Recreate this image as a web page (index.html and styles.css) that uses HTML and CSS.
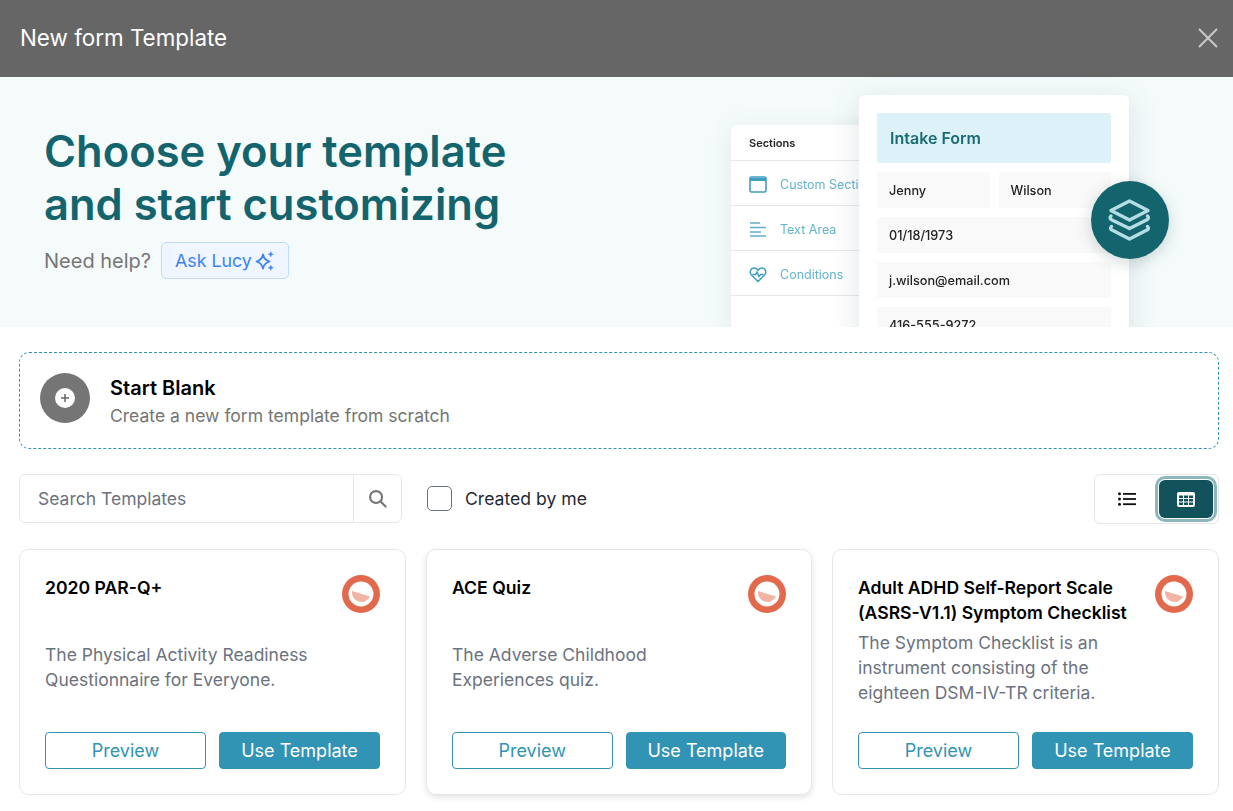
FILE: index.html
```html
<!DOCTYPE html>
<html lang="en">
<head>
  <meta charset="UTF-8">
  <title>New form Template</title>
  <link rel="stylesheet" href="styles.css">
</head>
<body>
  <header class="topbar">
    <h2 class="topbar-title">New form Template</h2>
    <svg class="close-icon" width="22" height="22" viewBox="0 0 22 22" fill="none" stroke="#c9c9c9" stroke-width="2"><path d="M2 2l18 18M20 2L2 20"/></svg>
  </header>

  <section class="hero">
    <div class="hero-text">
      <h1>Choose your template<br>and start customizing</h1>
      <div class="help-row">
        <span class="help-label">Need help?</span>
        <button class="ask-btn">Ask Lucy
          <svg width="20" height="20" viewBox="0 0 20 20"><path d="M8 3.500c.9 4 2.900 6 6.500 7-3.600 1-5.600 3-6.500 7-.9-4-2.900-6-6.500-7 3.600-1 5.600-3 6.500-7z" fill="none" stroke="#3b82f6" stroke-width="1.800" stroke-linejoin="round"/><path d="M15.800 .8c.3 1.500 1 2.200 2.500 2.500-1.500.3-2.200 1-2.500 2.500-.3-1.500-1-2.200-2.500-2.500 1.500-.3 2.200-1 2.500-2.500zM15.800 14.300c.3 1.500 1 2.200 2.500 2.500-1.500.3-2.200 1-2.500 2.500-.3-1.500-1-2.200-2.500-2.500 1.500-.3 2.200-1 2.500-2.500z" fill="#3b82f6" stroke="#3b82f6" stroke-width=".6"/></svg>
        </button>
      </div>
    </div>

    <div class="hero-art">
      <div class="side-panel">
        <div class="side-head">Sections</div>
        <div class="side-row">
          <svg width="18" height="17" viewBox="0 0 18 17" fill="none" stroke="#3f9fc0" stroke-width="1.600"><rect x="1" y="1" width="16" height="15" rx="1.500"/><path d="M1 3.500h16" stroke-width="3"/></svg>
          <span>Custom Section</span>
        </div>
        <div class="side-row">
          <svg width="18" height="17" viewBox="0 0 18 17" fill="none" stroke="#5fb0cc" stroke-width="1.600"><path d="M1 2h10M1 6.500h16M1 11h11M1 15h16"/></svg>
          <span>Text Area</span>
        </div>
        <div class="side-row">
          <svg width="18" height="17" viewBox="0 0 18 17" fill="none" stroke="#3f9fc0" stroke-width="1.500"><path d="M9 15.500L2.200 8.800C.2 6.500 1.500 2 5 2c1.800 0 3 1 4 2.200C10 3 11.200 2 13 2c3.500 0 4.800 4.500 2.800 6.800z"/><path d="M3.500 8.500h3L8 6l2 4.500 1.500-2h3"/></svg>
          <span>Conditions</span>
        </div>
      </div>
      <div class="form-card">
        <div class="form-title">Intake Form</div>
        <div class="form-pair">
          <div class="form-field">Jenny</div>
          <div class="form-field">Wilson</div>
        </div>
        <div class="form-field">01/18/1973</div>
        <div class="form-field">j.wilson@email.com</div>
        <div class="form-field">416-555-9272</div>
      </div>
      <div class="layers-badge">
        <svg width="44" height="42" viewBox="0 0 44 42" fill="none" stroke="#b5dde6" stroke-width="3.400" stroke-linejoin="round" stroke-linecap="round"><path d="M21.500 2L40 11.500 21.500 21 3 11.500z"/><path d="M3 17c-1.500 1.500-1 3 .5 3.800L21.500 29.500l17.500-8.700c1.500-.8 2-2.300.5-3.800"/><path d="M3.500 27.500c-1.500 1.500-1 2.800.5 3.600l17.500 8.900 17.500-8.900c1.500-.8 2-2.100.5-3.600"/></svg>
      </div>
    </div>
  </section>

  <main class="content">
    <div class="start-blank">
      <div class="plus-disc">
        <span class="plus-dot">
          <svg width="10" height="10" viewBox="0 0 10 10" stroke="#666" stroke-width="1.500"><path d="M5 1v8M1 5h8"/></svg>
        </span>
      </div>
      <div class="start-text">
        <div class="start-title">Start Blank</div>
        <div class="start-sub">Create a new form template from scratch</div>
      </div>
    </div>

    <div class="toolbar">
      <div class="search">
        <span class="search-input">Search Templates</span>
        <span class="search-btn">
          <svg width="19" height="19" viewBox="0 0 20 20" fill="none" stroke="#757575" stroke-width="2.200"><circle cx="8.500" cy="8.500" r="6.300"/><path d="M13.200 13.200l5.300 5.300" stroke-linecap="round"/></svg>
        </span>
      </div>
      <label class="check">
        <span class="check-box"></span>
        Created by me
      </label>
      <div class="view-toggle">
        <span class="view-btn">
          <svg width="18" height="14" viewBox="0 0 18 14" fill="#111"><circle cx="1.500" cy="1.800" r="1.500"/><circle cx="1.500" cy="7" r="1.500"/><circle cx="1.500" cy="12.200" r="1.500"/><rect x="5" y="1" width="13" height="1.800"/><rect x="5" y="6.100" width="13" height="1.800"/><rect x="5" y="11.300" width="13" height="1.800"/></svg>
        </span>
        <span class="view-btn active">
          <svg width="18" height="15" viewBox="0 0 18 15"><rect width="18" height="15" rx="2" fill="#fff"/><path d="M2 3.500h4v2.500H2zM7 3.500h4v2.500H7zM12 3.500h4v2.500h-4zM2 7h4v2.500H2zM7 7h4v2.500H7zM12 7h4v2.500h-4zM2 10.500h4V13H2zM7 10.500h4V13H7zM12 10.500h4V13h-4z" fill="#12535b"/></svg>
        </span>
      </div>
    </div>

    <div class="cards">
      <article class="card">
        <div class="card-head">
          <h3>2020 PAR-Q+</h3>
          <svg class="brand" width="38" height="38" viewBox="0 0 38 38"><circle cx="19" cy="19" r="19" fill="#e2694c"/><circle cx="19" cy="19" r="12.500" fill="#fff"/><path d="M10 16L28 21.500A9.500 9.500 0 0 1 10 16z" fill="#f2b5a5"/></svg>
        </div>
        <p class="card-desc">The Physical Activity Readiness Questionnaire for Everyone.</p>
        <div class="card-actions">
          <button class="btn-outline">Preview</button>
          <button class="btn-solid">Use Template</button>
        </div>
      </article>

      <article class="card raised">
        <div class="card-head">
          <h3>ACE Quiz</h3>
          <svg class="brand" width="38" height="38" viewBox="0 0 38 38"><circle cx="19" cy="19" r="19" fill="#e2694c"/><circle cx="19" cy="19" r="12.500" fill="#fff"/><path d="M10 16L28 21.500A9.500 9.500 0 0 1 10 16z" fill="#f2b5a5"/></svg>
        </div>
        <p class="card-desc">The Adverse Childhood Experiences quiz.</p>
        <div class="card-actions">
          <button class="btn-outline">Preview</button>
          <button class="btn-solid">Use Template</button>
        </div>
      </article>

      <article class="card">
        <div class="card-head">
          <h3>Adult ADHD Self-Report Scale (ASRS-V1.1) Symptom Checklist</h3>
          <svg class="brand" width="38" height="38" viewBox="0 0 38 38"><circle cx="19" cy="19" r="19" fill="#e2694c"/><circle cx="19" cy="19" r="12.500" fill="#fff"/><path d="M10 16L28 21.500A9.500 9.500 0 0 1 10 16z" fill="#f2b5a5"/></svg>
        </div>
        <p class="card-desc">The Symptom Checklist is an instrument consisting of the eighteen DSM-IV-TR criteria.</p>
        <div class="card-actions">
          <button class="btn-outline">Preview</button>
          <button class="btn-solid">Use Template</button>
        </div>
      </article>
    </div>
  </main>
</body>
</html>
```

FILE: styles.css
```css
* {
  box-sizing: border-box;
}
html, body {
  height: 100%;
}
body {
  margin: 0;
  overflow: hidden;
  background: #fff;
  color: #111;
  font-family: Inter, "Liberation Sans", sans-serif;
}
button {
  font-family: inherit;
  cursor: pointer;
}

.topbar {
  height: 77px;
  padding: 0 14px 2px 20px;
  display: flex;
  align-items: center;
  justify-content: space-between;
  background: #666;
}
.topbar-title {
  margin: 0;
  font-size: 22.4px;
  font-weight: 400;
  color: #fff;
}

.hero {
  position: relative;
  height: 250px;
  padding: 48px 44px 0;
  overflow: hidden;
  background: #f5fbfb;
}
.hero h1 {
  margin: 0;
  font-size: 43.5px;
  line-height: 53px;
  font-weight: 600;
  color: #14646e;
}
.help-row {
  margin-top: 11px;
  display: flex;
  align-items: center;
  gap: 10px;
}
.help-label {
  font-size: 20px;
  color: #757575;
}
.ask-btn {
  width: 128px;
  height: 37px;
  padding: 0 0 0 13px;
  display: flex;
  align-items: center;
  gap: 3px;
  font-size: 17.8px;
  color: #3b82f6;
  background: #eff6ff;
  border: 1px solid #bfdbfe;
  border-radius: 5px;
}

/* picture on the right of the hero */
.hero-art {
  position: absolute;
  left: 731px;
  top: 18px;
  display: flex;
  align-items: flex-start;
  filter: blur(0.4px);
}
.side-panel {
  width: 170px;
  height: 240px;
  margin-top: 30px;
  margin-right: -42px;
  background: #fff;
  border-radius: 6px 6px 0 0;
  box-shadow: 0 4px 24px rgba(60, 90, 100, 0.1);
  overflow: hidden;
}
.side-head {
  height: 36px;
  padding-left: 18px;
  display: flex;
  align-items: center;
  font-size: 11px;
  font-weight: 600;
  color: #222;
  border-bottom: 1px solid #e8e8e8;
}
.side-row {
  height: 45px;
  padding: 2px 0 0 18px;
  display: flex;
  align-items: center;
  gap: 13px;
  font-size: 12.5px;
  white-space: nowrap;
  color: #62b3cf;
  border-bottom: 1px solid #e8e8e8;
}
.form-card {
  position: relative;
  width: 270px;
  height: 260px;
  padding: 18px;
  display: flex;
  flex-direction: column;
  gap: 9px;
  background: #fff;
  border-radius: 6px;
  box-shadow: 0 6px 30px rgba(60, 90, 100, 0.16);
}
.form-title {
  height: 50px;
  flex-shrink: 0;
  padding-left: 13px;
  display: flex;
  align-items: center;
  font-size: 16px;
  font-weight: 600;
  color: #1b6b76;
  background: #ddf2f8;
  border-radius: 2px;
}
.form-pair {
  display: flex;
  flex-shrink: 0;
  gap: 9px;
}
.form-pair .form-field {
  flex: 1;
}
.form-field {
  height: 36px;
  flex-shrink: 0;
  padding: 1px 0 0 12px;
  display: flex;
  align-items: center;
  font-size: 12.7px;
  font-weight: 500;
  color: #222;
  background: #f9f9f9;
  border-radius: 2px;
}
.layers-badge {
  position: absolute;
  left: 360px;
  top: 86px;
  width: 78px;
  height: 78px;
  display: flex;
  align-items: center;
  justify-content: center;
  border-radius: 50%;
  background: #14646e;
  box-shadow: 0 4px 16px rgba(20, 60, 70, 0.2);
}

.content {
  padding: 25px 14px 0 19px;
}
.start-blank {
  height: 97px;
  padding: 20px 0 0 20px;
  display: flex;
  align-items: flex-start;
  gap: 20px;
  border: 1px dashed #2f94b5;
  border-radius: 10px;
}
.plus-disc {
  width: 50px;
  height: 50px;
  display: flex;
  align-items: center;
  justify-content: center;
  border-radius: 50%;
  background: #757575;
}
.plus-dot {
  width: 20px;
  height: 20px;
  display: flex;
  align-items: center;
  justify-content: center;
  background: #fff;
  border-radius: 50%;
}
.start-text {
  margin-top: 1px;
}
.start-title {
  font-size: 20px;
  font-weight: 600;
  line-height: 28px;
  color: #000;
}
.start-sub {
  font-size: 17.55px;
  line-height: 28px;
  color: #757575;
}

.toolbar {
  margin-top: 25px;
  display: flex;
  align-items: flex-start;
}
.search {
  width: 383px;
  height: 49px;
  display: flex;
  align-items: center;
  justify-content: space-between;
  border: 1px solid #e5e7eb;
  border-radius: 6px;
}
.search-input {
  padding-left: 18px;
  font-size: 17.5px;
  color: #6b7280;
}
.search-btn {
  width: 48px;
  height: 100%;
  display: flex;
  align-items: center;
  justify-content: center;
  border-left: 1px solid #e5e7eb;
}
.check {
  height: 49px;
  margin-left: 25px;
  display: flex;
  align-items: center;
  gap: 13px;
  font-size: 17.6px;
  color: #1f2937;
}
.check-box {
  width: 25px;
  height: 25px;
  background: #fff;
  border: 1px solid #6b7280;
  border-radius: 5px;
}
.view-toggle {
  width: 125px;
  height: 50px;
  margin-left: auto;
  padding: 0 5px;
  display: flex;
  align-items: center;
  gap: 4px;
  border: 1px solid #e5e7eb;
  border-radius: 6px;
}
.view-btn {
  flex: 1;
  height: 38px;
  display: flex;
  align-items: center;
  justify-content: center;
  border-radius: 6px;
}
.view-btn.active {
  background: #12535b;
  box-shadow: 0 0 0 1px #fff, 0 0 0 4px #8db6bd;
}

.cards {
  margin-top: 25px;
  display: grid;
  grid-template-columns: 387px 386px 387px;
  gap: 20px;
}
.card {
  height: 246px;
  padding: 25px 25px 25px;
  display: flex;
  flex-direction: column;
  border: 1px solid #e5e7eb;
  border-radius: 10px;
}
.card.raised {
  box-shadow: 0 2px 6px rgba(0, 0, 0, 0.12);
}
.card-head {
  height: 50px;
  flex-shrink: 0;
  display: flex;
  justify-content: space-between;
  align-items: flex-start;
  gap: 20px;
}
.card-head h3 {
  margin: 0;
  font-size: 17.6px;
  line-height: 25px;
  font-weight: 600;
  color: #000;
}
.brand {
  flex-shrink: 0;
}
.card-desc {
  flex: 1;
  max-width: 275px;
  margin: 0 0 23px;
  display: flex;
  align-items: center;
  font-size: 17.5px;
  line-height: 25px;
  color: #6b7280;
}
.card-actions {
  display: flex;
  gap: 13px;
}
.card-actions button {
  flex: 1;
  height: 37px;
  font-size: 18px;
  border-radius: 4px;
}
.btn-outline {
  color: #3194b5;
  background: #fff;
  border: 1px solid #3194b5;
}
.btn-solid {
  color: #fff;
  background: #3194b5;
  border: 1px solid #3194b5;
}
```
